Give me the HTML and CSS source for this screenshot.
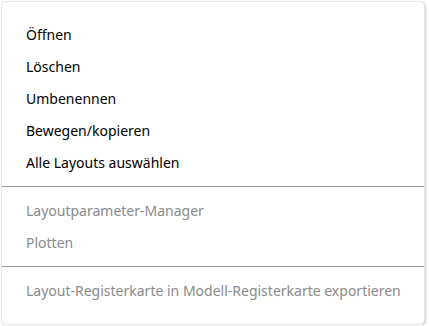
FILE: index.html
```html
<!DOCTYPE html>
<html lang="de">
<head>
    <meta charset="UTF-8">
    <title>Layout-Kontextmenü</title>
    <link rel="stylesheet" href="styles.css">
</head>
<body>
    <div class="menu">
        <div class="item">Öffnen</div>
        <div class="item">Löschen</div>
        <div class="item">Umbenennen</div>
        <div class="item">Bewegen/kopieren</div>
        <div class="item">Alle Layouts auswählen</div>
        <div class="separator"></div>
        <div class="item disabled">Layoutparameter-Manager</div>
        <div class="item disabled">Plotten</div>
        <div class="separator"></div>
        <div class="item disabled">Layout-Registerkarte in Modell-Registerkarte exportieren</div>
    </div>
</body>
</html>
```

FILE: styles.css
```css
body {
    margin: 0;
    background-color: #fff;
    font-family: "Noto Sans", "Open Sans", sans-serif;
}
.menu {
    margin: 1px 0 0 1px;
    width: 424px;
    box-sizing: border-box;
    padding: 17px 0 17px 0;
    background-color: #fff;
    border: 1px solid #e6e6e6;
    border-radius: 5px;
    box-shadow: 1px 1px 2px rgba(0, 0, 0, 0.18);
}
.item {
    height: 32px;
    line-height: 32px;
    padding-left: 24px;
    font-size: 14px;
    color: #000;
    white-space: nowrap;
}
.item.disabled {
    color: #8a8a8a;
}
.separator {
    height: 1px;
    background-color: #a0a0a0;
    margin: 7px 0 8px 0;
}
```
